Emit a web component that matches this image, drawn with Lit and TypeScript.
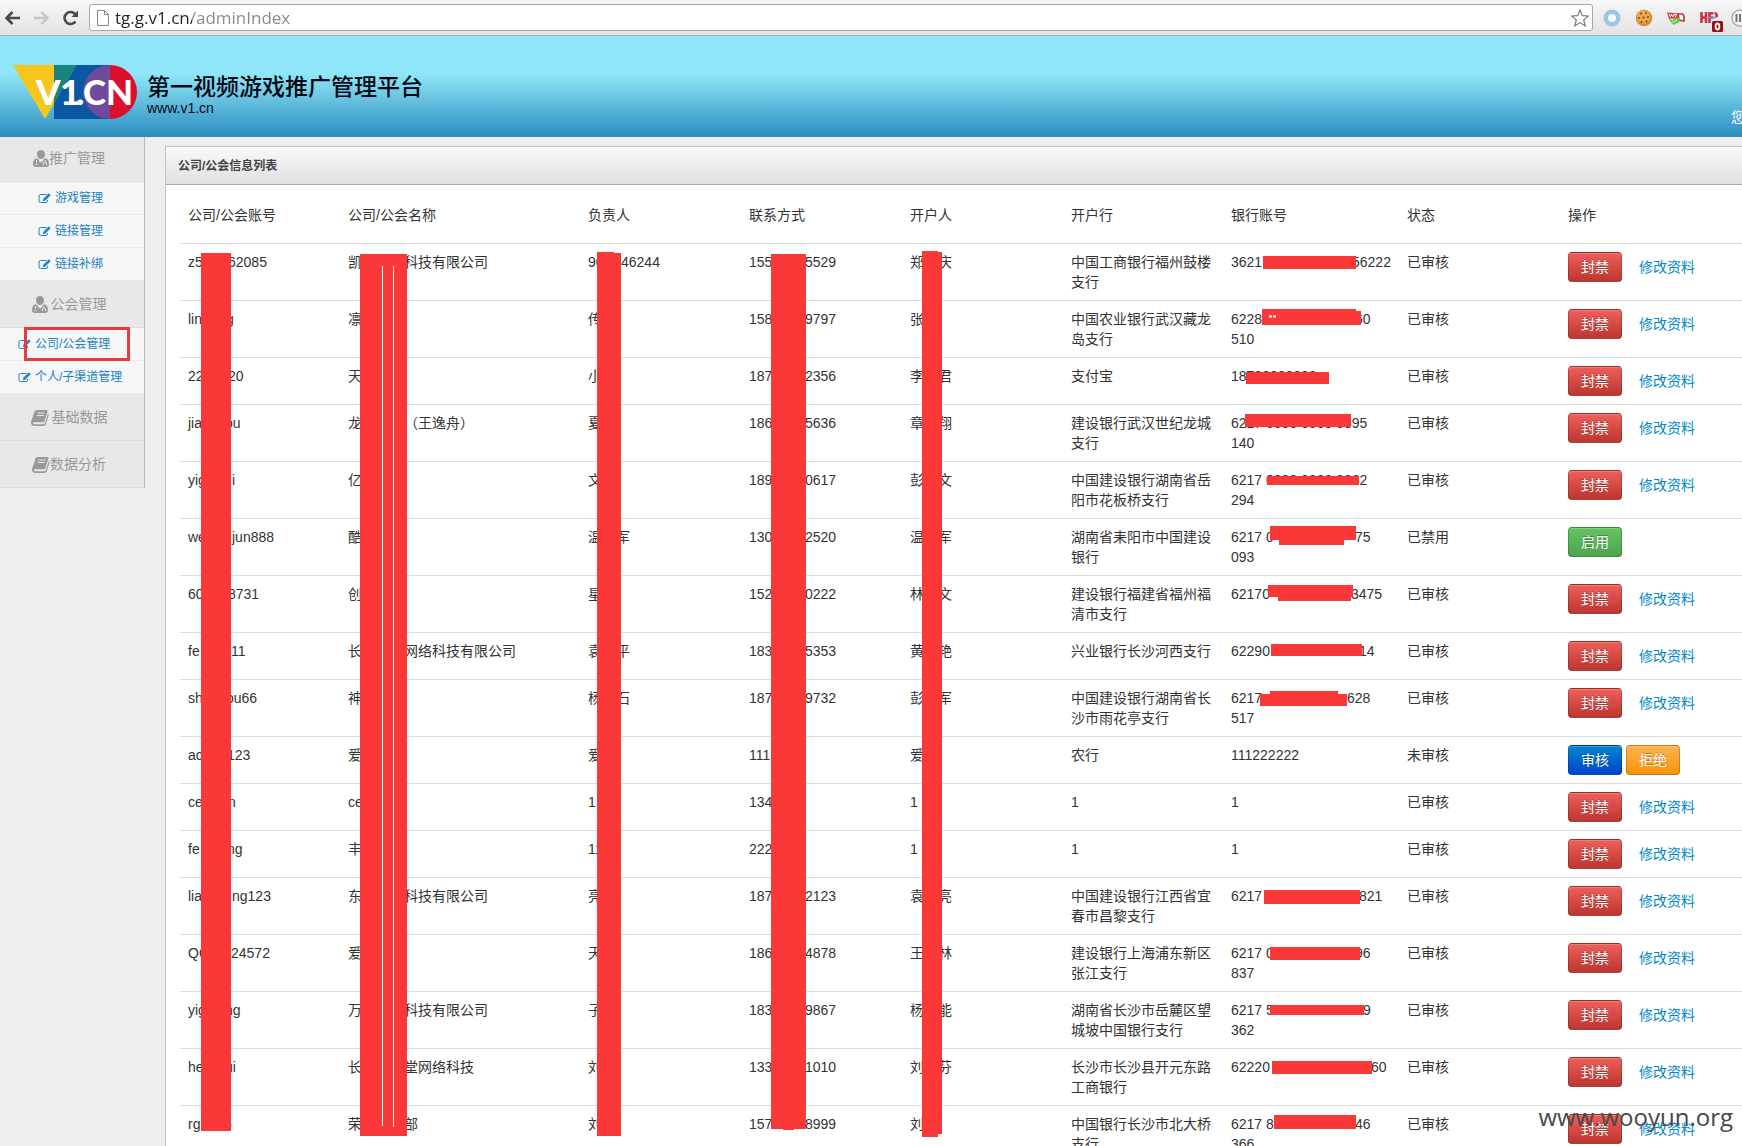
import { LitElement, html, css, svg, nothing } from "lit";
import { customElement } from "lit/decorators.js";

/** Visible start of a value, pixel offset of its visible end, visible end, second line. */
type Part = [head: string, offset?: number, tail?: string, second?: string];

interface Row {
  account: Part;
  company: Part;
  owner: Part;
  phone: Part;
  holder: Part;
  bank: string;
  card: Part;
  status: string;
}

const row = (
  account: Part, company: Part, owner: Part, phone: Part, holder: Part,
  bank: string, card: Part, status = "已审核",
): Row => ({ account, company, owner, phone, holder, bank, card, status });

const ROWS: Row[] = [
  row(["z5", 40, "62085"], ["凯", 56, "科技有限公司"], ["90", 33, "46244"], ["155", 56, "5529"], ["郑", 28, "庆"], "中国工商银行福州鼓楼支行", ["3621", 121, "56222"]),
  row(["lin", 38, "g"], ["凛"], ["传"], ["158", 56, "9797"], ["张"], "中国农业银行武汉藏龙岛支行", ["6228", 124, "60", "510"]),
  row(["22", 40, "20"], ["天"], ["小"], ["187", 56, "2356"], ["李", 28, "君"], "支付宝", ["18700000000"]),
  row(["jia", 37, "ou"], ["龙", 56, "（王逸舟）"], ["夏"], ["186", 56, "5636"], ["章", 28, "翔"], "建设银行武汉世纪龙城支行", ["6217 0000 0000 0895", 0, "", "140"]),
  row(["yig", 44, "i"], ["亿"], ["文"], ["189", 56, "0617"], ["彭", 28, "文"], "中国建设银行湖南省岳阳市花板桥支行", ["6217 0000 0000 0062", 0, "", "294"]),
  row(["we", 44, "jun888"], ["酷"], ["温", 28, "军"], ["130", 56, "2520"], ["温", 28, "军"], "湖南省耒阳市中国建设银行", ["6217 0", 124, "75", "093"], "已禁用"),
  row(["60", 40, "8731"], ["创"], ["星"], ["152", 56, "0222"], ["林", 28, "文"], "建设银行福建省福州福清市支行", ["62170", 120, "3475"]),
  row(["fe", 43, "11"], ["长", 56, "网络科技有限公司"], ["袁", 28, "平"], ["183", 56, "5353"], ["黄", 28, "艳"], "兴业银行长沙河西支行", ["62290", 128, "14"]),
  row(["sh", 38, "ou66"], ["神"], ["杨", 28, "石"], ["187", 56, "9732"], ["彭", 28, "军"], "中国建设银行湖南省长沙市雨花亭支行", ["6217", 116, "628", "517"]),
  row(["ac", 39, "123"], ["爱"], ["爱"], ["111"], ["爱"], "农行", ["111222222"], "未审核"),
  row(["ce", 40, "n"], ["ce"], ["1"], ["134"], ["1"], "1", ["1"]),
  row(["fe", 39, "ng"], ["丰"], ["11"], ["222"], ["1"], "1", ["1"]),
  row(["lia", 44, "ng123"], ["东", 56, "科技有限公司"], ["亮"], ["187", 56, "2123"], ["袁", 28, "亮"], "中国建设银行江西省宜春市昌黎支行", ["6217", 128, "821"]),
  row(["QQ", 43, "24572"], ["爱"], ["天"], ["186", 56, "4878"], ["王", 28, "林"], "建设银行上海浦东新区张江支行", ["6217 0", 124, "96", "837"]),
  row(["yig", 37, "ng"], ["万", 56, "科技有限公司"], ["子"], ["183", 56, "9867"], ["杨", 28, "能"], "湖南省长沙市岳麓区望城坡中国银行支行", ["6217 5", 132, "9", "362"]),
  row(["he", 37, "ui"], ["长", 56, "堂网络科技"], ["刘"], ["133", 56, "1010"], ["刘", 28, "芬"], "长沙市长沙县开元东路工商银行", ["62220", 140, "60"]),
  row(["rg", 36, "6"], ["荣", 56, "部"], ["刘"], ["157", 56, "8999"], ["刘"], "中国银行长沙市北大桥支行", ["6217 8", 124, "46", "366"]),
];

const HEADINGS = ["公司/公会账号", "公司/公会名称", "负责人", "联系方式", "开户人", "开户行", "银行账号", "状态", "操作"];

/** Painted-over areas: left, top, right, bottom. */
const MASKS = [
  [201, 253, 231, 1131], [360, 254, 407, 1136], [597, 252, 614, 1136], [614, 253, 621, 1136],
  [771, 254, 806, 1129], [783, 1129, 794, 1130], [922, 251, 938, 1137], [938, 252, 942, 1134],
  [1263, 256, 1356, 269], [1262, 309, 1356, 325], [1356, 311, 1361, 325], [1246, 372, 1329, 384],
  [1245, 414, 1351, 427], [1267, 476, 1359, 485], [1270, 526, 1356, 540], [1279, 540, 1344, 545],
  [1268, 585, 1353, 597], [1278, 597, 1351, 601], [1271, 644, 1362, 656], [1270, 691, 1338, 694],
  [1260, 694, 1347, 706], [1264, 890, 1360, 904], [1270, 947, 1360, 960], [1270, 1005, 1364, 1015],
  [1272, 1061, 1372, 1074], [1274, 1115, 1356, 1129],
];

const iconUsers = html`<svg viewBox="0 0 16 17" width="16" height="17" aria-hidden="true">
  <path fill="currentColor" d="M8 0c2.600 0 4 1.700 4 4.200S10.300 9 8 9 4 6.800 4 4.200 5.400 0 8 0zM3.500 8.200 5.600 9.500 7 13l1-2 1 2 1.400-3.500 2.100-1.300C15 9 16 11 16 14c0 2-1 3-2.500 3h-11C1 17 0 16 0 14c0-3 1-5 3.500-5.800z"/>
  <path fill="none" stroke="#e8e8e8" d="M3.500 10v3M2.500 14.500h2M12 10v1.500M10.500 15v-2q1.500-2.200 3 0v2"/>
</svg>`;

const iconBook = html`<svg viewBox="0 0 18 17" width="18" height="17" aria-hidden="true">
  <path fill="currentColor" d="M6 1h9.500q1.500 0 1 1.500L13.400 12q-.4 1.200-1.800 1.200H3q-1.200 0-1 1t1.200 1h9.300q1 0 1.400-1.100L17 4.800q.9.700.5 1.900l-2.700 8.500Q14.300 17 12.500 17H2.600Q.2 16.600 0 14q0-1 .5-2.400L3.500 2.500Q4 1 6 1z"/>
  <path stroke="#e8e8e8" d="M6.500 4h7M5.800 6.500h7"/>
</svg>`;

const iconEdit = html`<svg viewBox="0 0 13 11" width="13" height="11" aria-hidden="true">
  <path fill="none" stroke="currentColor" d="M8.500 1.500H2.500Q1 1.500 1 3v5q0 1.500 1.500 1.500h5.500Q9.500 9.500 9.500 8V7"/>
  <path fill="currentColor" d="M10.800.3 12.700 2.200 7.200 7.700 5 8.200 5.300 5.800z"/>
</svg>`;

@customElement("app-root")
export class AppRoot extends LitElement {
  static styles = css`
    :host {
      display: flex;
      flex-direction: column;
      position: relative;
      height: 100vh;
      overflow: hidden;
      background: #eee;
      color: #333;
      font: 14px/20px "Liberation Sans", "Noto Sans CJK SC", sans-serif;
    }
    * { box-sizing: border-box; }
    button { font: inherit; cursor: pointer; }
    a { color: #0088cc; text-decoration: none; }
    svg { display: block; flex: none; }

    .browser {
      display: flex;
      align-items: center;
      flex: none;
      height: 36px;
      padding: 0 0 0 4px;
      border-bottom: 1px solid #b3adb3;
      background: linear-gradient(#f7f7f7, #e3e3e3);
    }
    .tool { padding: 0; border: 0; background: none; }
    .nav-tools { display: flex; gap: 12px; width: 85px; }
    .address {
      display: flex;
      align-items: center;
      flex: 1;
      gap: 6px;
      height: 27px;
      padding: 0 3px 0 7px;
      border: 1px solid #a8a8a8;
      border-radius: 3px;
      background: #fff;
    }
    .url {
      flex: 1;
      min-width: 0;
      padding: 0;
      border: 0;
      outline: 0;
      font: 17px/24px "Open Sans", sans-serif;
      color: transparent;
      background: linear-gradient(90deg, #222 77px, #888 77px);
      -webkit-background-clip: text;
      background-clip: text;
    }
    .extensions { display: flex; align-items: center; gap: 14px; width: 149px; padding-left: 10px; }
    .badged { overflow: visible; }

    .banner {
      display: flex;
      position: relative;
      z-index: 1;
      flex: none;
      height: 101px;
      padding: 29px 0 0 13px;
      background: linear-gradient(#8fe6f8 38%, #2b8cc0);
    }
    .logo-text { font: 900 35px Lato, sans-serif; fill: #fff; }
    .brand { padding: 4px 0 0 9px; color: #000814; }
    .title { margin: 0; font: 500 23px/32px "Noto Sans CJK SC", sans-serif; }
    .site { line-height: 14px; }
    .greeting { width: 11px; margin: 42px 0 0 auto; color: #fff; white-space: nowrap; }

    .body { display: flex; flex: 1; min-height: 0; gap: 20px; }
    .side { flex: none; align-self: flex-start; width: 145px; margin-top: -2px; border-right: 1px solid #bbb; font-size: 12px; }
    .group {
      display: flex;
      align-items: center;
      justify-content: center;
      height: 47px;
      margin: 0;
      padding-right: 6px;
      border-bottom: 1px solid #dcdcdc;
      background: #e8e8e8;
      color: #999;
      font-size: 14px;
      font-weight: 400;
    }
    .spaced { gap: 3px; }
    .items { margin: 0; padding: 0; list-style: none; }
    .item {
      display: flex;
      align-items: center;
      justify-content: center;
      gap: 4px;
      height: 33px;
      padding-right: 3px;
      border-bottom: 1px solid #eaeaea;
      background: #f6f6f6;
      white-space: nowrap;
      color: #2283c5;
    }
    .item.start { justify-content: flex-start; padding-left: 18px; }

    .panel { flex: 1; min-width: 0; margin-top: 9px; border: 1px solid #c4c4c4; border-width: 1px 0 0 1px; background: #fff; }
    .panel-title {
      height: 38px;
      margin: 0;
      padding: 0 12px;
      border-bottom: 1px solid #aaa;
      background: linear-gradient(#fafafa, #e0e0e0);
      font-size: 12px;
      line-height: 38px;
      font-weight: 700;
      color: #444;
    }
    .panel-body { padding: 2px 0 0 14px; }
    .grid { width: 100%; border-collapse: separate; border-spacing: 0; table-layout: fixed; }
    .w160 { width: 160px; }
    .w161 { width: 161px; }
    .w176 { width: 176px; }
    .w240 { width: 240px; }
    th { height: 56px; padding: 0 8px; text-align: left; font-weight: 400; }
    td { padding: 8px 0 8px 8px; border-top: 1px solid #ddd; vertical-align: top; }
    .bank { padding-right: 8px; }
    .head { display: inline-block; }
    .actions { display: flex; align-items: center; gap: 4px; }
    .btn {
      width: 54px;
      height: 30px;
      padding: 0;
      border: 1px solid rgba(0, 0, 0, 0.2);
      border-bottom-color: rgba(0, 0, 0, 0.3);
      border-radius: 4px;
      color: #fff;
      text-shadow: 0 -1px 0 rgba(0, 0, 0, 0.25);
      box-shadow: inset 0 1px 0 rgba(255, 255, 255, 0.2);
    }
    .danger { background: linear-gradient(#ee5f5b, #bd362f); }
    .success { background: linear-gradient(#62c462, #51a351); }
    .primary { background: linear-gradient(#0088cc, #0044cc); }
    .warning { background: linear-gradient(#fbb450, #f89406); }
    .edit { padding-left: 13px; }

    .marks { position: absolute; inset: 0; width: 100%; height: 100%; pointer-events: none; }
    .watermark {
      position: absolute;
      right: 9px;
      bottom: 13px;
      font: 24px/32px "Open Sans", sans-serif;
      color: #484848;
      pointer-events: none;
    }
  `;

  private browser() {
    return html`<div class="browser">
      <div class="nav-tools">
        <button class="tool" aria-label="后退"><svg width="17" height="16" viewBox="0 0 17 16"><path d="M16 8H3M8.500 2 2.500 8l6 6" fill="none" stroke="#4a4a4a" stroke-width="2.600"/></svg></button>
        <button class="tool" aria-label="前进"><svg width="17" height="16" viewBox="0 0 17 16"><path d="M1 8h13M8.500 2l6 6-6 6" fill="none" stroke="#c4c4c4" stroke-width="2.400"/></svg></button>
        <button class="tool" aria-label="刷新"><svg width="17" height="16" viewBox="0 0 17 16"><path d="M13.500 11.500A6 6 0 1 1 13 4" fill="none" stroke="#4a4a4a" stroke-width="2.600"/><path d="M16 .5V7H9.500z" fill="#4a4a4a"/></svg></button>
      </div>
      <div class="address">
        <svg width="12" height="16" viewBox="0 0 12 16"><path d="M.5.5h7l4 4v11H.5zM7.500.5v4h4" fill="#fff" stroke="#888"/></svg>
        <input class="url" aria-label="地址" .value=${"tg.g.v1.cn/adminIndex"} />
        <button class="tool" aria-label="收藏"><svg width="18" height="18" viewBox="0 0 18 18"><path d="m9 .9 2.300 5.700 6.100.4-4.700 3.900 1.500 6L9 13.600l-5.200 3.300 1.500-6L.6 7l6.100-.4z" fill="#fff" stroke="#777" stroke-width="1.200"/></svg></button>
      </div>
      <div class="extensions">
        <svg width="18" height="18" viewBox="0 0 18 18"><circle cx="9" cy="9" r="6.300" fill="#f4f8fb" stroke="#99c7e6" stroke-width="4.500"/></svg>
        <svg width="18" height="18" viewBox="0 0 18 18"><circle cx="9" cy="9" r="8.300" fill="#d58a2c"/><circle cx="8.500" cy="8" r="6.800" fill="#eaa94c"/><g fill="#7a4216"><circle cx="6" cy="4.500" r=".9"/><circle cx="11" cy="4" r=".9"/><circle cx="4" cy="9" r="1"/><circle cx="8.500" cy="8.500" r="1"/><circle cx="13" cy="8" r="1"/><circle cx="6.500" cy="13" r="1"/><circle cx="11.500" cy="12.500" r="1"/></g></svg>
        <svg width="18" height="18" viewBox="0 0 18 18"><path d="M0 3.500 12 4.500 13 10 2 9.500z" fill="#cf3d45"/><path d="m2.500 5 1 2.500 1.200-2 1 2.300L7 5.500h2.500L8 8.500" fill="none" stroke="#fff"/><path d="M11 5h4.500l1.500 2v5l-5-1z" fill="#fff" stroke="#d3313c" stroke-width="1.700"/><path d="m1 9.500 4 1.500 8-3-.5 5-6 3z" fill="#67c94a"/><path d="m5 12 1.500 1.500L10 10.500" fill="none" stroke="#d9f5cd"/></svg>
        <svg class="badged" width="18" height="18" viewBox="0 0 18 18"><path d="M2.500 3v11M7 3v11M3 8.500h4M10.500 14V4.200h4M10.500 8.500h3.500M15.500 4.200q3 0 2 4" fill="none" stroke="#c93444" stroke-width="2.600"/><path d="M9 8.500h8" stroke="#6f8fb5" stroke-width="1.500"/><rect x="13" y="12" width="11" height="11" rx="1.500" fill="#9e0d16"/><ellipse cx="18.500" cy="17.500" rx="1.900" ry="3" fill="none" stroke="#fff" stroke-width="1.800"/></svg>
        <svg width="18" height="18" viewBox="0 0 18 18"><circle cx="9" cy="9" r="8" fill="#f5f5f5" stroke="#aaa" stroke-width="1.500"/><path d="M5.500 5v8M9 5v8M12.500 5v8" stroke="#777" stroke-width="2"/></svg>
      </div>
    </div>`;
  }

  private banner() {
    return html`<header class="banner">
      <svg width="125" height="54" viewBox="0 0 125 54" role="img" aria-label="V1.CN">
        <path d="M0 0h64L32 54z" fill="#f6c61c"/>
        <path d="M41 0h56v54H41z" fill="#0b57a4"/>
        <path d="M41 0h23L41 39z" fill="#18857c"/>
        <path d="M97 0a27 27 0 0 0 0 54z" fill="#6f4c9b"/>
        <path d="M97 0a27 27 0 0 1 0 54z" fill="#d90f2b"/>
        <text class="logo-text" x="23" y="40">V</text>
        <text class="logo-text" x="47" y="40">1</text>
        <text class="logo-text" x="63" y="40">.</text>
        <text class="logo-text" x="70" y="40">CN</text>
      </svg>
      <div class="brand">
        <h1 class="title">第一视频游戏推广管理平台</h1>
        <div class="site">www.v1.cn</div>
      </div>
      <div class="greeting">您</div>
    </header>`;
  }

  private items(names: string[], start = false) {
    return html`<ul class="items">
      ${names.map((n) => html`<li><a class="item ${start ? "start" : ""}" href="#">${iconEdit}${n}</a></li>`)}
    </ul>`;
  }

  private part([head, offset, tail, second]: Part) {
    return html`${offset ? html`<span class="head" style="width:${offset}px">${head}</span>${tail}` : head}${second ? html`<br />${second}` : nothing}`;
  }

  private actions(status: string) {
    if (status === "已禁用") return html`<button class="btn success">启用</button>`;
    if (status === "未审核") {
      return html`<button class="btn primary">审核</button><button class="btn warning">拒绝</button>`;
    }
    return html`<button class="btn danger">封禁</button><a class="edit" href="#">修改资料</a>`;
  }

  render() {
    return html`
      ${this.browser()} ${this.banner()}
      <div class="body">
        <nav class="side">
          <h2 class="group">${iconUsers}推广管理</h2>
          ${this.items(["游戏管理", "链接管理", "链接补绑"])}
          <h2 class="group spaced">${iconUsers}公会管理</h2>
          ${this.items(["公司/公会管理", "个人/子渠道管理"], true)}
          <h2 class="group spaced">${iconBook}基础数据</h2>
          <h2 class="group">${iconBook}数据分析</h2>
        </nav>
        <main class="panel">
          <h2 class="panel-title">公司/公会信息列表</h2>
          <div class="panel-body">
            <table class="grid">
              <colgroup>
                <col class="w160" /><col class="w240" /><col class="w161" /><col class="w161" /><col class="w161" />
                <col class="w160" /><col class="w176" /><col class="w161" /><col />
              </colgroup>
              <thead><tr>${HEADINGS.map((h) => html`<th scope="col">${h}</th>`)}</tr></thead>
              <tbody>
                ${ROWS.map((r) => html`<tr>
                  <td>${this.part(r.account)}</td>
                  <td>${this.part(r.company)}</td>
                  <td>${this.part(r.owner)}</td>
                  <td>${this.part(r.phone)}</td>
                  <td>${this.part(r.holder)}</td>
                  <td class="bank">${r.bank}</td>
                  <td>${this.part(r.card)}</td>
                  <td>${r.status}</td>
                  <td><div class="actions">${this.actions(r.status)}</div></td>
                </tr>`)}
              </tbody>
            </table>
          </div>
        </main>
      </div>
      <svg class="marks" aria-hidden="true">
        <g fill="#fb3838">
          ${MASKS.map(([l, t, r, b]) => svg`<rect x=${l} y=${t} width=${r - l} height=${b - t} />`)}
        </g>
        <path d="M382.500 266v860M393.500 266v861" stroke="#fff" />
        <path d="M1269 316.500h3M1273 316.500h3" stroke="#fff" stroke-width="2" />
        <rect x="25.500" y="328.500" width="103" height="31" fill="none" stroke="#e83a3a" stroke-width="3" />
      </svg>
      <div class="watermark">www.wooyun.org</div>
    `;
  }
}
